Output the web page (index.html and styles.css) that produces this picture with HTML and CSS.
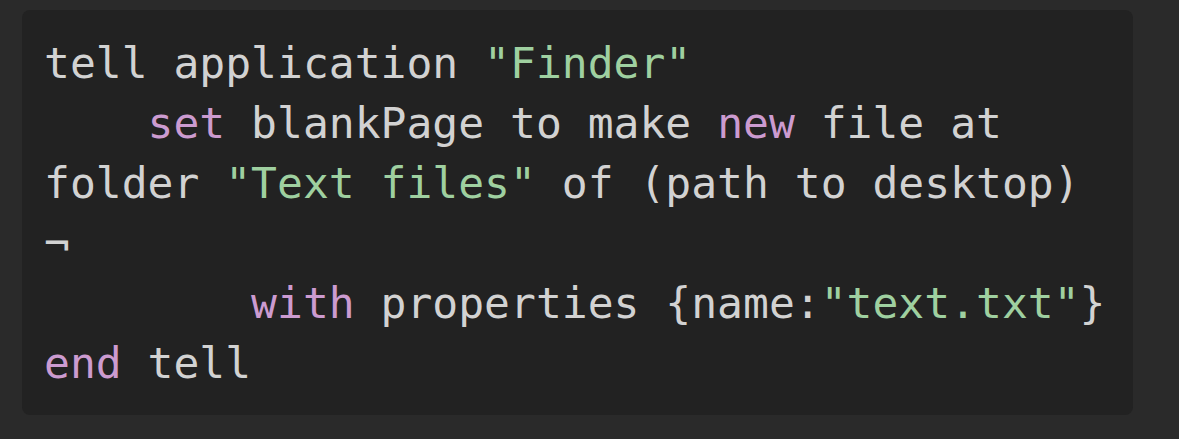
FILE: index.html
```html
<!DOCTYPE html>
<html>
<head>
<meta charset="utf-8">
<link rel="stylesheet" href="styles.css">
</head>
<body>
<div class="page">
  <div class="code">
    <div class="line">tell application <span class="str">"Finder"</span></div>
    <div class="line">    <span class="kw">set</span> blankPage to make <span class="kw">new</span> file at</div>
    <div class="line">folder <span class="str">"Text files"</span> of (path to desktop)</div>
    <div class="line">¬</div>
    <div class="line">        <span class="kw">with</span> properties {name:<span class="str">"text.txt"</span>}</div>
    <div class="line"><span class="kw">end</span> tell</div>
  </div>
</div>
</body>
</html>
```

FILE: styles.css
```css
html, body {
  margin: 0;
  padding: 0;
  background: #2a2a2a;
}
.page {
  padding: 10px 46px 24px 22px;
}
.code {
  margin: 0;
  background: #222222;
  border-radius: 8px;
  padding: 23px 24px 22px 22px;
  font-family: "DejaVu Sans Mono", monospace;
  font-size: 43px;
  line-height: 60px;
  color: #d2d2d2;
}
.line {
  white-space: pre;
}
.kw {
  color: #cc9bd0;
}
.str {
  color: #9fd0a0;
}
```
